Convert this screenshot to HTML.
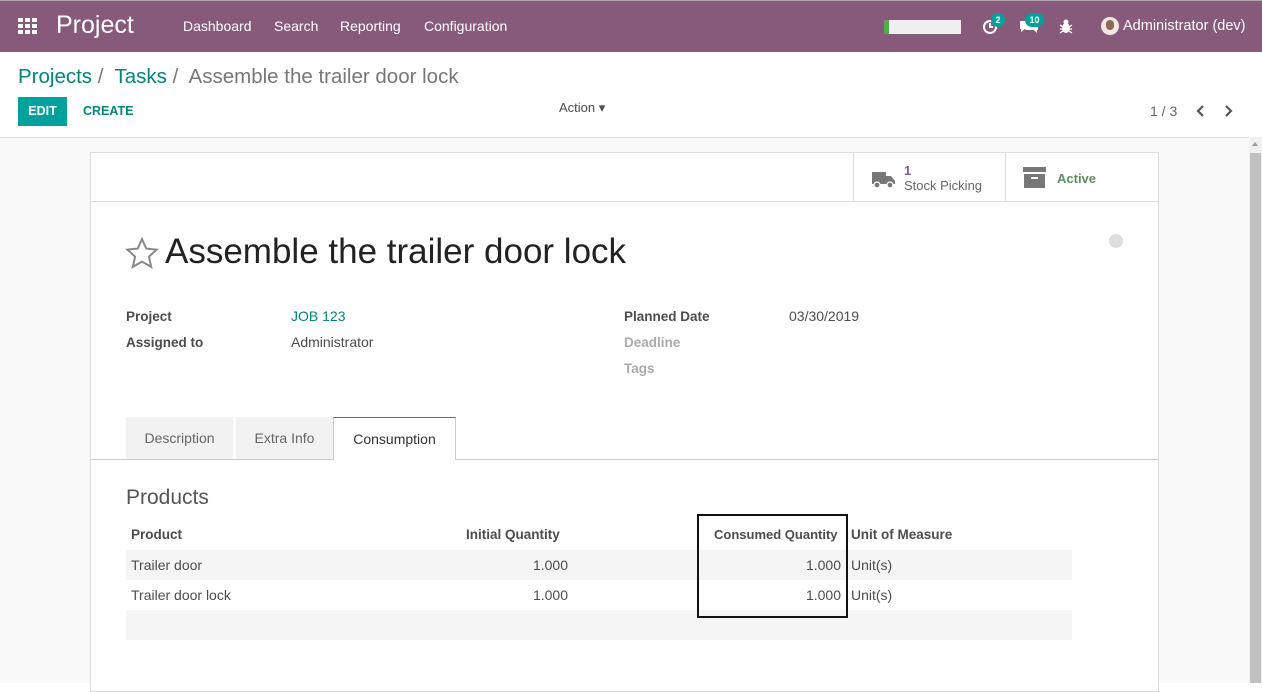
<!DOCTYPE html>
<html><head><style>
*{box-sizing:border-box;margin:0;padding:0}
body{width:1262px;height:683px;overflow:hidden;font-family:"Liberation Sans",sans-serif;font-size:14px;color:#4c4c4c;background:#fff;position:relative}
.abs{position:absolute}
.nav{left:0;top:0;width:1262px;height:52px;background:#875a7b;border-top:1px solid #aaa;color:#fff}
.nav span{position:absolute;top:17px;font-size:14px}
.teal{color:#00847d}
.bg{left:0;top:137px;width:1249px;height:546px;background:#f9f9f9;border-top:1px solid #ddd}
.sheet{left:90px;top:152px;width:1069px;height:540px;background:#fff;border:1px solid #ddd}
.lbl{font-weight:bold;font-size:13.5px;color:#4c4c4c}
</style></head><body>
<div class="abs nav">
 <svg class="abs" style="left:18px;top:17px" width="19" height="17"><g fill="#fff"><rect x="0" y="0" width="5" height="4"/><rect x="7" y="0" width="5" height="4"/><rect x="14" y="0" width="5" height="4"/><rect x="0" y="6" width="5" height="4"/><rect x="7" y="6" width="5" height="4"/><rect x="14" y="6" width="5" height="4"/><rect x="0" y="12" width="5" height="4"/><rect x="7" y="12" width="5" height="4"/><rect x="14" y="12" width="5" height="4"/></g></svg>
 <span style="left:56px;top:10px;font-size:25px">Project</span>
 <span style="left:183px">Dashboard</span><span style="left:274px">Search</span><span style="left:340px">Reporting</span><span style="left:424px">Configuration</span>
 <div class="abs" style="left:884px;top:19px;width:77px;height:14px;background:#f0f0f0;border-left:5px solid #4bb04b"></div>
 <svg class="abs" style="left:982px;top:17px" width="18" height="18"><circle cx="8" cy="9" r="6" fill="none" stroke="#fff" stroke-width="2"/><path d="M8 5v4h3" stroke="#fff" stroke-width="2" fill="none"/></svg>
 <div class="abs" style="left:991px;top:12px;width:14px;height:14px;border-radius:7px;background:#00a09d;font-size:9px;text-align:center;line-height:14px;font-weight:bold">2</div>
 <svg class="abs" style="left:1019px;top:18px" width="20" height="16"><path d="M1 2h12v8H6l-4 3v-3H1z" fill="#fff"/><path d="M6 11h9l3 3v-3h1V5h-4" fill="#fff"/></svg>
 <div class="abs" style="left:1025px;top:12px;width:19px;height:14px;border-radius:7px;background:#00a09d;font-size:9px;text-align:center;line-height:14px;font-weight:bold">10</div>
 <svg class="abs" style="left:1059px;top:18px" width="14" height="15"><ellipse cx="7" cy="9" rx="4" ry="5" fill="#fff"/><circle cx="7" cy="3" r="2.5" fill="#fff"/><path d="M1 6l3 2M13 6l-3 2M1 10h3M13 10h-3M1 14l3-2M13 14l-3-2" stroke="#fff" stroke-width="1.3"/></svg>
 <div class="abs" style="left:1101px;top:16px;width:18px;height:18px;border-radius:9px;background:#f3e8e0;overflow:hidden"><div style="margin:3px auto;width:8px;height:10px;border-radius:4px;background:#8a6a58"></div></div>
 <span style="left:1123px;font-size:14.5px">Administrator (dev)</span>
</div>
<div class="abs" style="left:18px;top:65px;font-size:20.5px;color:#777"><span class="teal">Projects</span> /&nbsp; <span class="teal">Tasks</span> /&nbsp; Assemble the trailer door lock</div>
<div class="abs" style="left:18px;top:97px;width:49px;height:29px;background:#00a09d;color:#fff;font-size:12.5px;font-weight:bold;text-align:center;line-height:29px">EDIT</div>
<div class="abs teal" style="left:83px;top:104px;font-size:12.5px;font-weight:bold">CREATE</div>
<div class="abs" style="left:559px;top:100px;font-size:13px">Action ▾</div>
<div class="abs" style="left:1150px;top:103px;font-size:14px;color:#666">1 / 3</div>
<svg class="abs" style="left:1195px;top:104px" width="50" height="14"><path d="M8 2l-5 5 5 5M31 2l5 5-5 5" stroke="#555" stroke-width="2.2" fill="none"/></svg>
<div class="abs bg"></div>
<div class="abs" style="left:1249px;top:137px;width:13px;height:546px;background:#f1f1f1"><div style="position:absolute;left:1px;top:16px;width:11px;height:530px;background:#c1c1c1"></div><div style="position:absolute;left:3px;top:5px;border:3px solid transparent;border-bottom:4px solid #999;border-top:0"></div></div>
<div class="abs sheet">
 <div class="abs" style="left:0;top:48px;width:1067px;border-top:1px solid #ddd"></div>
 <div class="abs" style="left:762px;top:0;width:1px;height:48px;background:#ddd"></div>
 <div class="abs" style="left:914px;top:0;width:1px;height:48px;background:#ddd"></div>
 <svg class="abs" style="left:780px;top:16px" width="25" height="20"><path d="M1 3h14v12H1zM15 7h5l4 5v3h-9z" fill="#777"/><circle cx="6" cy="16" r="3" fill="#777" stroke="#fff" stroke-width="1.3"/><circle cx="19" cy="16" r="3" fill="#777" stroke="#fff" stroke-width="1.3"/></svg>
 <div class="abs" style="left:813px;top:10px;font-size:13px;line-height:15px;color:#875a7b;font-weight:bold">1</div>
 <div class="abs" style="left:813px;top:25px;font-size:13px;color:#666">Stock Picking</div>
 <svg class="abs" style="left:932px;top:14px" width="24" height="22"><rect x="0" y="0" width="23" height="5" fill="#777"/><rect x="1" y="7" width="21" height="14" fill="#777"/><rect x="8" y="10" width="7" height="2" fill="#fff"/></svg>
 <div class="abs" style="left:966px;top:18px;font-size:13px;color:#5d8f5d;font-weight:bold">Active</div>
 <svg class="abs" style="left:34px;top:84px" width="34" height="32"><path d="M17 2l4.3 9.6 10.4 1-7.8 7 2.3 10.3L17 24.6 7.8 29.9l2.3-10.3-7.8-7 10.4-1z" fill="none" stroke="#888" stroke-width="2"/></svg>
 <div class="abs" style="left:74px;top:79px;font-size:35px;color:#222">Assemble the trailer door lock</div>
 <div class="abs" style="left:1018px;top:81px;width:14px;height:14px;border-radius:7px;background:#ddd"></div>
 <div class="abs lbl" style="left:35px;top:156px">Project</div>
 <div class="abs teal" style="left:200px;top:155px">JOB 123</div>
 <div class="abs lbl" style="left:35px;top:182px">Assigned to</div>
 <div class="abs" style="left:200px;top:181px">Administrator</div>
 <div class="abs lbl" style="left:533px;top:156px">Planned Date</div>
 <div class="abs" style="left:698px;top:155px">03/30/2019</div>
 <div class="abs lbl" style="left:533px;top:182px;color:#aaa">Deadline</div>
 <div class="abs lbl" style="left:533px;top:208px;color:#aaa">Tags</div>
 <div class="abs" style="left:0;top:306px;width:1067px;border-top:1px solid #ccc"></div>
 <div class="abs" style="left:35px;top:264px;width:107px;height:42px;background:#f2f2f2;text-align:center;line-height:42px;color:#666">Description</div>
 <div class="abs" style="left:145px;top:264px;width:97px;height:42px;background:#f2f2f2;text-align:center;line-height:42px;color:#666">Extra Info</div>
 <div class="abs" style="left:242px;top:264px;width:123px;height:43px;background:#fff;border:1px solid #ccc;border-top-color:#875a7b;border-bottom:none;text-align:center;line-height:42px;color:#333">Consumption</div>
 <div class="abs" style="left:35px;top:333px;font-size:21px;color:#555">Products</div>
 <div class="abs" style="left:35px;top:367px;width:946px;height:30px;font-weight:bold;line-height:30px;font-size:13.5px">
  <span class="abs" style="left:5px">Product</span><span class="abs" style="left:340px">Initial Quantity</span><span class="abs" style="left:588px;font-size:13px">Consumed Quantity</span><span class="abs" style="left:725px">Unit of Measure</span></div>
 <div class="abs" style="left:35px;top:397px;width:946px;height:30px;background:#f5f5f5;line-height:30px"><span class="abs" style="left:5px">Trailer door</span><span class="abs" style="right:504px">1.000</span><span class="abs" style="right:231px">1.000</span><span class="abs" style="left:725px">Unit(s)</span></div>
 <div class="abs" style="left:35px;top:427px;width:946px;height:30px;background:#fff;line-height:30px"><span class="abs" style="left:5px">Trailer door lock</span><span class="abs" style="right:504px">1.000</span><span class="abs" style="right:231px">1.000</span><span class="abs" style="left:725px">Unit(s)</span></div>
 <div class="abs" style="left:35px;top:457px;width:946px;height:30px;background:#f5f5f5"></div>
 <div class="abs" style="left:606px;top:361px;width:151px;height:104px;border:2px solid #111"></div>
</div>
</body></html>
